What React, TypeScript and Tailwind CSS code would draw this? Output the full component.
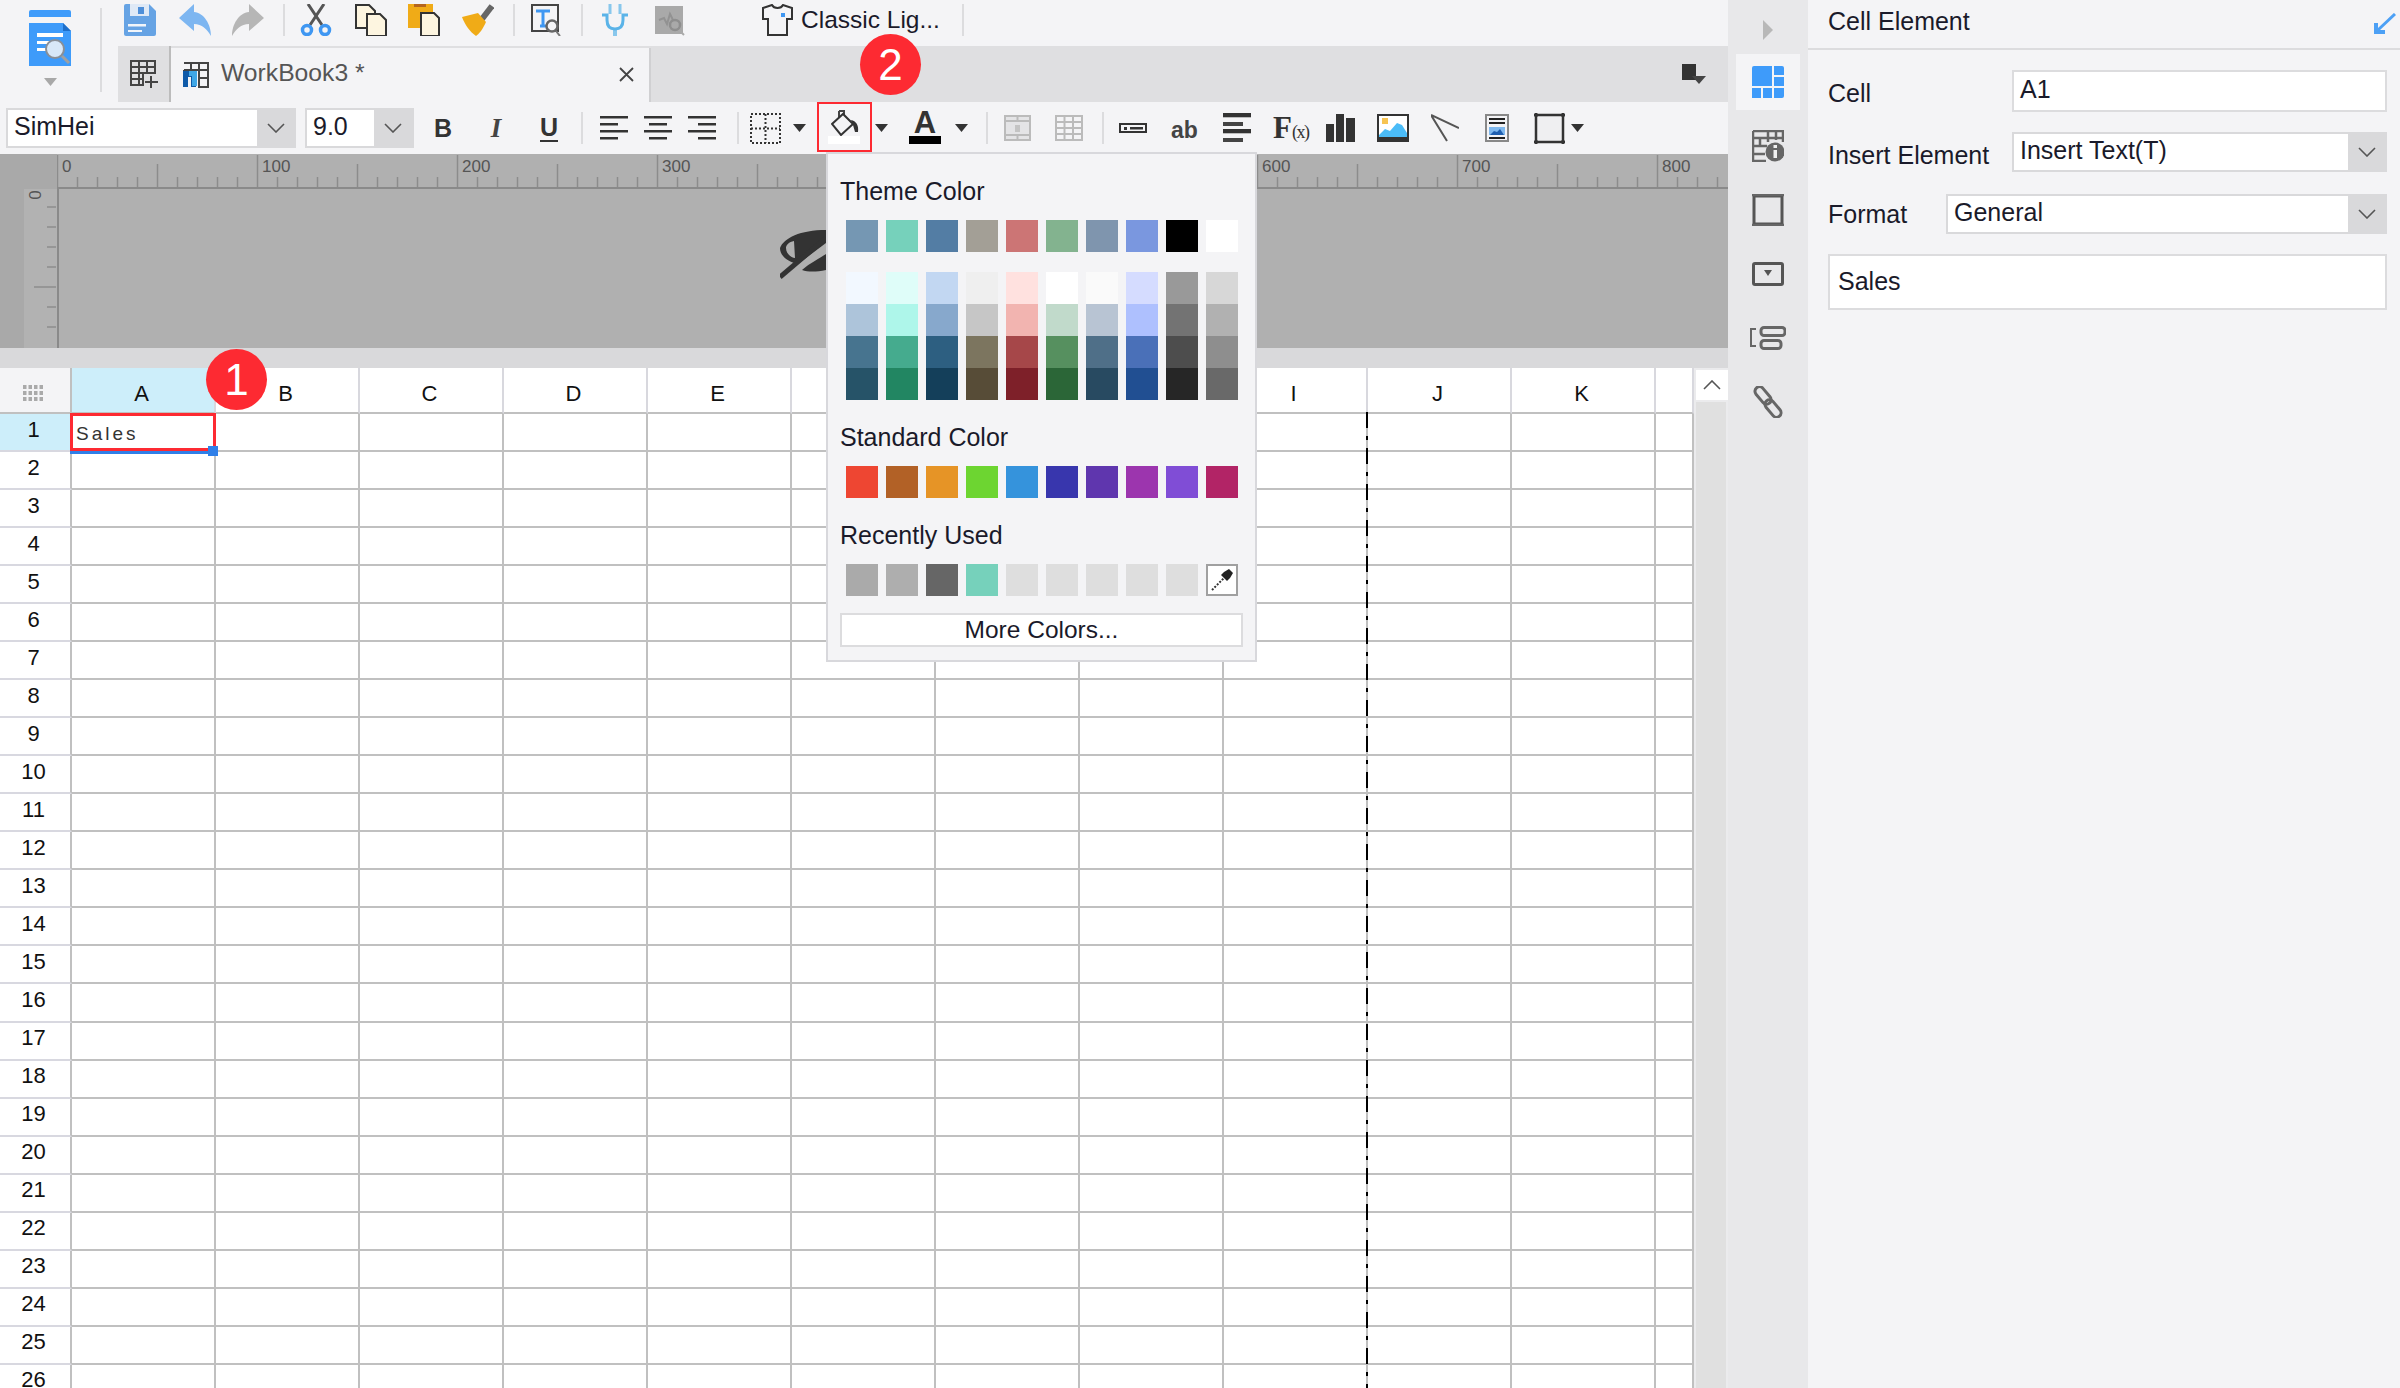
import React from "react";

const SANS = "[font-family:'Liberation_Sans',Arial,sans-serif]";

const themeTop = ["bg-[#7597b3]","bg-[#76d1bb]","bg-[#537da4]","bg-[#a39f96]","bg-[#cc7575]","bg-[#83b38f]","bg-[#7f95ae]","bg-[#7a97df]","bg-[#000000]","bg-[#ffffff]"];
const shades = [
  ["bg-[#f2f8ff]","bg-[#dffdf9]","bg-[#c2d7f2]","bg-[#efefef]","bg-[#ffe1df]","bg-[#ffffff]","bg-[#fafafa]","bg-[#d5dcff]","bg-[#999999]","bg-[#d7d7d7]"],
  ["bg-[#adc4da]","bg-[#aef6ea]","bg-[#87a8cc]","bg-[#c6c6c6]","bg-[#f2b4b0]","bg-[#c1dacb]","bg-[#b8c4d3]","bg-[#aec0fe]","bg-[#737373]","bg-[#b1b1b1]"],
  ["bg-[#47748f]","bg-[#45ab8e]","bg-[#2d5f81]","bg-[#7c755f]","bg-[#a64749]","bg-[#56905f]","bg-[#4f6f88]","bg-[#4a70b8]","bg-[#4d4d4d]","bg-[#8e8e8e]"],
  ["bg-[#265368]","bg-[#228662]","bg-[#143f5a]","bg-[#574c37]","bg-[#7e2029]","bg-[#2b6637]","bg-[#284a61]","bg-[#214f92]","bg-[#262626]","bg-[#696969]"],
];
const standard = ["bg-[#ee4632]","bg-[#b26126]","bg-[#e69426]","bg-[#6dd531]","bg-[#3593dc]","bg-[#3836ad]","bg-[#5f36ae]","bg-[#9c35ae]","bg-[#804dd6]","bg-[#b22466]"];
const recent = ["bg-[#aaaaaa]","bg-[#aeaeae]","bg-[#666666]","bg-[#76d1bb]","bg-[#dedede]","bg-[#dedede]","bg-[#dedede]","bg-[#dedede]","bg-[#dedede]"];

const columns = ["A","B","C","D","E","F","G","H","I","J","K",""];
const rows = Array.from({ length: 26 }, (_, i) => i + 1);

function Chevron({ up = false }: { up?: boolean }) {
  return (
    <svg width="18" height="10" viewBox="0 0 18 10" fill="none" stroke="#555" strokeWidth="1.6">
      <path d={up ? "M1 9 L9 1 L17 9" : "M1 1 L9 9 L17 1"} />
    </svg>
  );
}

function Tri({ className }: { className: string }) {
  return (
    <svg className={className} width="13" height="8" viewBox="0 0 13 8">
      <path d="M0 0 H13 L6.5 8 Z" fill="#333" />
    </svg>
  );
}

function Sep({ className }: { className: string }) {
  return <div className={`w-[2px] bg-[#dcdcde] ${className}`} />;
}

function Combo({ className, text, btn }: { className: string; text: string; btn: string }) {
  return (
    <div className={`flex border-2 border-[#d9d9db] bg-white ${className}`}>
      <div className="flex-1 min-w-0 pl-[6px] pb-[2px] flex items-center text-[25px] text-[#1a1a2a] whitespace-nowrap">{text}</div>
      <div className={`flex items-center justify-center bg-[#d9d9db] ${btn}`}><Chevron /></div>
    </div>
  );
}

function AlignIcon({ kind, className }: { kind: "l" | "c" | "r"; className: string }) {
  const short = kind === "l" ? 0 : kind === "c" ? 5 : 10;
  return (
    <svg className={className} width="28" height="24" viewBox="0 0 28 24" fill="#333">
      <rect x="0" y="0" width="28" height="2.5" />
      <rect x={short} y="7" width="18" height="2.5" />
      <rect x="0" y="14" width="28" height="2.5" />
      <rect x={short} y="21" width="18" height="2.5" />
    </svg>
  );
}

function Swatches({ items, extra, className }: { items: string[]; extra?: React.ReactNode; className: string }) {
  return (
    <div className={`grid grid-cols-[repeat(10,32px)] gap-x-[8px] ${className}`}>
      {items.map((c, i) => <div key={i} className={`h-[32px] ${c}`} />)}
      {extra}
    </div>
  );
}

function ColorPopup() {
  return (
    <div className="absolute left-[826px] top-[152px] w-[431px] h-[510px] border-2 border-[#d8d8dc] bg-[#f4f4f6] text-[25px] leading-[30px] text-[#1a1a2a]">
      <div className="ml-[12px] mt-[22px]">Theme Color</div>
      <Swatches className="ml-[18px] mt-[14px]" items={themeTop} />
      <div className="ml-[18px] mt-[20px] flex flex-col">
        {shades.map((r, i) => (
          <Swatches key={i} className="" items={r} />
        ))}
      </div>
      <div className="ml-[12px] mt-[22px]">Standard Color</div>
      <Swatches className="ml-[18px] mt-[14px]" items={standard} />
      <div className="ml-[12px] mt-[22px]">Recently Used</div>
      <Swatches
        className="ml-[18px] mt-[14px]"
        items={recent}
        extra={
          <div className="h-[32px] w-[32px] border-2 border-[#a0a0a0] bg-white flex items-center justify-center">
            <svg width="26" height="26" viewBox="0 0 26 26" fill="none">
              <path d="M3 23 L15 11" stroke="#333" strokeWidth="2" strokeDasharray="2 1.5" />
              <path d="M12 8 L18 14 L21 11 L24 6 L20 2 L15 5 Z" fill="#222" />
            </svg>
          </div>
        }
      />
      <div className="ml-[12px] mt-[17px] w-[403px] h-[34px] border-2 border-[#dcdcde] bg-white flex items-center justify-center text-[24.5px]">More Colors...</div>
    </div>
  );
}

function Badge({ n, className }: { n: string; className: string }) {
  return (
    <div className={`absolute w-[61px] h-[61px] rounded-full bg-[#fd2a32] text-white text-[44px] leading-none flex items-center justify-center ${className}`}>{n}</div>
  );
}

function TopIcons() {
  return (
    <div className="h-[46px] flex items-start pt-[4px]">
      {/* save */}
      <svg className="ml-[6px]" width="32" height="32" viewBox="0 0 32 32">
        <path d="M0 2 Q0 0 2 0 H25 L32 7 V30 Q32 32 30 32 H2 Q0 32 0 30 Z" fill="#66a3e4" />
        <rect x="6" y="0" width="19" height="12" fill="#dfe9f6" />
        <rect x="14" y="3" width="6" height="7" fill="#4f8fd8" />
        <rect x="4" y="20" width="18" height="2.5" fill="#f1f5fa" />
        <rect x="4" y="26" width="14" height="2" fill="#f1f5fa" />
      </svg>
      {/* undo */}
      <svg className="ml-[23px]" width="32" height="32" viewBox="0 0 32 32">
        <path d="M0 14 L15 0 V8 C25 9 32 20 32 32 C28 25 23 20 15 20 V27 Z" fill="#7db6f1" />
      </svg>
      {/* redo */}
      <svg className="ml-[21px]" width="32" height="32" viewBox="0 0 32 32">
        <path d="M32 14 L17 0 V8 C7 9 0 20 0 32 C4 25 9 20 17 20 V27 Z" fill="#b6b6b6" />
      </svg>
      <Sep className="ml-[19px] h-[32px]" />
      {/* scissors */}
      <svg className="ml-[15px]" width="32" height="32" viewBox="0 0 32 32" fill="none">
        <path d="M8 0 L22 21 M24 0 L10 21" stroke="#555" strokeWidth="3" />
        <circle cx="7" cy="26" r="4.5" stroke="#3f97f2" strokeWidth="3.5" />
        <circle cx="25" cy="26" r="4.5" stroke="#3f97f2" strokeWidth="3.5" />
      </svg>
      {/* copy */}
      <svg className="ml-[23px]" width="32" height="32" viewBox="0 0 32 32">
        <path d="M1 1 H14 L20 7 V24 H1 Z" fill="#fdf5e0" stroke="#333" strokeWidth="2" />
        <path d="M12 10 H25 L31 16 V32 H12 Z" fill="#fdf5e0" stroke="#333" strokeWidth="2" />
      </svg>
      {/* paste */}
      <svg className="ml-[21px]" width="32" height="32" viewBox="0 0 32 32">
        <rect x="0" y="0" width="25" height="24" fill="#f0ab17" />
        <rect x="6" y="0" width="12" height="3" fill="#b5651d" />
        <path d="M13 9 H26 L31 14 V32 H13 Z" fill="#fdf5e0" stroke="#333" strokeWidth="2" />
      </svg>
      {/* brush */}
      <svg className="ml-[22px]" width="32" height="32" viewBox="0 0 32 32">
        <path d="M20 15 L30 2" stroke="#666" strokeWidth="6" />
        <path d="M0 13 L16 9 L24 18 C21 25 17 30 14 32 C8 28 3 21 0 13 Z" fill="#f0ab17" />
      </svg>
      <Sep className="ml-[19px] h-[32px]" />
      {/* text preview */}
      <svg className="ml-[16px]" width="32" height="32" viewBox="0 0 32 32" fill="none">
        <rect x="1" y="1" width="26" height="26" stroke="#444" strokeWidth="2" />
        <path d="M5 7 H19 M12 7 V22 M9 22 H15" stroke="#3f97f2" strokeWidth="3" />
        <circle cx="21" cy="22" r="5.5" fill="#f4f4f6" stroke="#666" strokeWidth="2.5" />
        <path d="M25 27 L29 32" stroke="#777" strokeWidth="2" />
      </svg>
      <Sep className="ml-[18px] h-[32px]" />
      {/* plug */}
      <svg className="ml-[19px]" width="26" height="32" viewBox="0 0 26 32" fill="none" stroke="#5ab3e8">
        <path d="M8 0 V10 M18 0 V10" strokeWidth="3" opacity="0.7" />
        <path d="M0 11 H5 V16 C5 23 9 25 13 25 C17 25 21 23 21 16 V11 H26" strokeWidth="3" />
        <path d="M13 25 V32" strokeWidth="4" opacity="0.7" />
      </svg>
      {/* disabled */}
      <svg className="ml-[27px]" width="32" height="32" viewBox="0 0 32 32" fill="none">
        <rect x="0" y="2" width="28" height="28" fill="#a9a9a9" />
        <path d="M4 16 L9 14 L12 20 L15 10 L18 16" stroke="#929292" strokeWidth="2" />
        <circle cx="20" cy="21" r="5" stroke="#8e8e8e" strokeWidth="2.5" />
        <path d="M24 26 L29 31" stroke="#aaa" strokeWidth="2" />
      </svg>
      {/* shirt */}
      <svg className="ml-[75px]" width="32" height="32" viewBox="0 0 32 32" fill="none">
        <path d="M10 1 L1 4 L1 15 L6 15 V31 H25 V15 L30 15 L30 4 L21 1 C19 5 12 5 10 1 Z" stroke="#333" strokeWidth="2" />
        <rect x="19" y="9" width="4" height="4" fill="#3f97f2" />
      </svg>
      <span className="ml-[7px] text-[24.5px] leading-[32px] pb-[2px] text-[#1a1a2a] whitespace-nowrap">Classic Lig...</span>
      <Sep className="ml-[22px] h-[32px]" />
    </div>
  );
}

function TabBar() {
  return (
    <div className="h-[56px] flex items-stretch bg-[#dfdfe1]">
      <div className="w-[53px] flex items-center justify-center border-r-2 border-[#bcbcbc]">
        <svg width="28" height="28" viewBox="0 0 28 28" fill="none" stroke="#444" strokeWidth="2">
          <path d="M1 1 H25 V13 H1 Z M1 1 V25 H13 V13 M9 1 V25 M17 1 V13 M1 7 H25 M1 19 H13" />
          <path d="M21 16 V28 M15 22 H28" />
        </svg>
      </div>
      <div className="w-[480px] mt-[2px] bg-[#f4f4f6] border-r-2 border-[#d0d0d2] flex items-center relative">
        <svg className="ml-[12px]" width="26" height="26" viewBox="0 0 26 26" fill="none">
          <path d="M1 1 H25 V25 H16 V1 M8 1 V8 M16 8 H25 M1 8 H25 M16 16 H25 M1 8 V12" stroke="#444" strokeWidth="2" />
          <path d="M0 9 H13 V25 H8 V15 H5 V25 H0 Z" fill="#0f5aa8" />
          <path d="M6 9 H14 V24 H9 V14 H6 Z" fill="#3fa7e6" />
        </svg>
        <span className="ml-[12px] text-[24.7px] leading-none text-[#555] pb-[4px] whitespace-nowrap">WorkBook3 *</span>
        <svg className="absolute left-[448px] top-[19px]" width="15" height="15" viewBox="0 0 15 15" stroke="#444" strokeWidth="1.8">
          <path d="M1 1 L14 14 M14 1 L1 14" />
        </svg>
      </div>
      <div className="flex-1 flex items-start justify-end pt-[18px] pr-[22px]">
        <svg width="24" height="20" viewBox="0 0 24 20">
          <rect x="0" y="0" width="14" height="16" fill="#333" />
          <path d="M10 12 H24 L17 20 Z" fill="#444" />
        </svg>
      </div>
    </div>
  );
}

function FormatBar() {
  return (
    <div className="h-[52px] flex items-center">
      <Combo className="ml-[6px] w-[290px] h-[40px]" btn="w-[37px]" text="SimHei" />
      <Combo className="ml-[9px] w-[109px] h-[40px]" btn="w-[38px]" text="9.0" />
      <span className="ml-[20px] w-[16px] text-center text-[25px] font-bold leading-none text-[#333]">B</span>
      <span className="ml-[40px] w-[12px] text-center text-[27px] italic font-bold leading-none text-[#444] [font-family:'Liberation_Serif',serif]">I</span>
      <span className="ml-[38px] w-[18px] text-center text-[25px] font-bold leading-none text-[#333] border-b-2 border-[#333]">U</span>
      <Sep className="ml-[23px] h-[32px]" />
      <AlignIcon kind="l" className="ml-[17px]" />
      <AlignIcon kind="c" className="ml-[16px]" />
      <AlignIcon kind="r" className="ml-[16px]" />
      <Sep className="ml-[21px] h-[32px]" />
      <svg className="ml-[11px]" width="31" height="31" viewBox="0 0 31 31" fill="none" stroke="#333" strokeWidth="2" strokeDasharray="2 2">
        <rect x="1" y="1" width="29" height="29" />
        <path d="M15.5 1 V30 M1 15.5 H30" />
      </svg>
      <Tri className="ml-[12px]" />
      <div className="ml-[11px] self-start w-[55px] h-[50px] border-2 border-[#fd2a32] flex flex-col items-start pl-[9px] pt-[6px]">
        <svg className="ml-[3px]" width="28" height="26" viewBox="0 0 28 26" fill="none">
          <path d="M8 1 H13 V5" stroke="#444" strokeWidth="2" />
          <path d="M8 1 V8" stroke="#444" strokeWidth="2" />
          <path d="M1 14 L12 4 L22 14 L10 25 Z" fill="#f4f4f6" stroke="#333" strokeWidth="2" />
          <path d="M20 10 C25 11 28 15 27 22 L24 22 L22 15 Z" fill="#333" />
        </svg>
        <div className="w-[32px] h-[8px] bg-white" />
      </div>
      <Tri className="ml-[3px]" />
      <div className="ml-[21px] w-[32px] self-start pt-[8px] flex flex-col items-center">
        <span className="h-[26px] text-[31px] font-bold leading-[26px] text-[#333]">A</span>
        <div className="w-[32px] h-[8px] bg-black" />
      </div>
      <Tri className="ml-[14px]" />
      <Sep className="ml-[18px] h-[32px]" />
      <svg className="ml-[16px]" width="27" height="26" viewBox="0 0 27 26" fill="none">
        <rect x="1" y="1" width="25" height="24" fill="#e4e4e6" stroke="#bbb" strokeWidth="2" />
        <path d="M1 6 H26 M1 20 H26 M13.5 1 V6 M13.5 20 V25" stroke="#bbb" strokeWidth="2" />
        <rect x="11" y="10" width="5" height="7" fill="#c4c4c4" />
      </svg>
      <svg className="ml-[24px]" width="28" height="26" viewBox="0 0 28 26" fill="none" stroke="#bbb" strokeWidth="2">
        <rect x="1" y="1" width="26" height="24" />
        <path d="M9.5 1 V25 M18 1 V25 M1 7 H27 M1 13 H27 M1 19 H27" />
      </svg>
      <Sep className="ml-[19px] h-[32px]" />
      <svg className="ml-[15px]" width="28" height="10" viewBox="0 0 28 10" fill="none">
        <rect x="1" y="1" width="26" height="8" stroke="#333" strokeWidth="2" />
        <rect x="5" y="4" width="3" height="3" fill="#333" />
        <rect x="11" y="4" width="13" height="2.5" fill="#333" />
      </svg>
      <span className="ml-[24px] w-[23px] pt-[4px] text-[23px] font-bold leading-none text-[#444] whitespace-nowrap">ab</span>
      <svg className="ml-[29px]" width="28" height="30" viewBox="0 0 28 30">
        <rect x="0" y="0" width="28" height="4" fill="#333" />
        <rect x="0" y="4" width="28" height="1" fill="#bbb" />
        <rect x="0" y="9" width="20" height="4" fill="#444" />
        <rect x="0" y="16" width="28" height="4" fill="#333" />
        <rect x="0" y="20" width="28" height="1" fill="#bbb" />
        <rect x="0" y="25" width="20" height="4" fill="#444" />
      </svg>
      <span className="ml-[22px] w-[33px] text-[#333] leading-none whitespace-nowrap [font-family:'Liberation_Serif',serif] pb-[2px]">
        <span className="text-[31px] font-bold">F</span><span className="text-[18px] tracking-[-1.5px]">(x)</span>
      </span>
      <svg className="ml-[20px]" width="29" height="28" viewBox="0 0 29 28" fill="#333">
        <rect x="0" y="10" width="8" height="18" />
        <rect x="10" y="0" width="8" height="28" />
        <rect x="20" y="4" width="9" height="24" />
      </svg>
      <svg className="ml-[22px]" width="32" height="28" viewBox="0 0 32 28">
        <rect x="0" y="0" width="32" height="28" fill="#333" />
        <rect x="2" y="2" width="28" height="21" fill="#fff" />
        <path d="M2 21 L8 15 L13 17 L20 9 L25 11 L30 19 V23 H2 Z" fill="#4bbcf8" />
        <rect x="5" y="4" width="6" height="6" fill="#f7c453" />
      </svg>
      <svg className="ml-[22px]" width="28" height="28" viewBox="0 0 28 28" fill="none" stroke="#555" strokeWidth="2">
        <path d="M0 1 L28 14 M0 1 L16 27" />
      </svg>
      <svg className="ml-[26px]" width="24" height="28" viewBox="0 0 24 28">
        <rect x="1" y="1" width="22" height="26" fill="#f4f4f6" stroke="#888" strokeWidth="2" />
        <rect x="4" y="4" width="16" height="2" fill="#222" />
        <rect x="4" y="8" width="16" height="2" fill="#222" />
        <rect x="4" y="13" width="16" height="8" fill="#7fb8ee" />
        <path d="M5 21 L9 17 L12 18 L15 15 L19 21 Z" fill="#1f5fb0" />
        <rect x="4" y="23" width="16" height="2" fill="#222" />
      </svg>
      <svg className="ml-[25px]" width="31" height="31" viewBox="0 0 31 31" fill="none">
        <rect x="2" y="2" width="27" height="27" fill="#efeff1" stroke="#333" strokeWidth="2.5" />
        <path d="M2 0 V4 M29 0 V4 M2 27 V31 M29 27 V31 M0 2 H4 M27 2 H31 M0 29 H4 M27 29 H31" stroke="#333" strokeWidth="2.5" />
      </svg>
      <Tri className="ml-[6px]" />
    </div>
  );
}

function Ruler() {
  const ticks = Array.from({ length: 84 }, (_, i) => i);
  const labels = [0, 100, 200, 300, 400, 500, 600, 700, 800];
  const vticks = [0, 1, 2, 3, 4, 5, 6];
  return (
    <div className="h-[194px] bg-[#b0b0b0] flex flex-col">
      <div className="h-[35px] flex">
        <div className="w-[57px] bg-[#a9a9a9]" />
        <svg className="flex-1" width="1671" height="35" viewBox="0 0 1671 35">
          {ticks.map((i) => {
            const x = i * 20 + 0.5;
            const top = i % 10 === 0 ? 1 : i % 5 === 0 ? 10 : 23;
            return <line key={i} x1={x} x2={x} y1={top} y2={33} stroke="#8c8c8c" strokeWidth="1.5" />;
          })}
          {labels.map((n) => (
            <text key={n} x={n * 2 + 5} y={18} fontSize="17" fill="#555" fontFamily="Liberation Sans">{n}</text>
          ))}
          <rect x="0" y="33" width="1671" height="2" fill="#8a8a8a" />
        </svg>
      </div>
      <div className="flex-1 flex min-h-0">
        <div className="w-[24px] bg-[#a9a9a9]" />
        <svg width="33" height="159" viewBox="0 0 33 159" className="bg-[#b2b2b2]">
          <text x="11" y="6" fontSize="17" fill="#555" fontFamily="Liberation Sans" textAnchor="middle" dominantBaseline="central" transform="rotate(-90 11 6)">0</text>
          {vticks.map((i) => (
            <line key={i} x1={i === 4 ? 10 : 23} x2={32} y1={18 + i * 20} y2={18 + i * 20} stroke="#8c8c8c" strokeWidth="1.5" />
          ))}
        </svg>
        <div className="w-[2px] bg-[#8a8a8a]" />
        <div className="flex-1 relative">
          <svg className="absolute left-[721px] top-[39px]" width="48" height="52" viewBox="0 0 48 52">
            <path d="M0 20 C4 10 20 2 46 2 V15 L18 36 C8 34 0 28 0 20 Z M6 20 C6 26 12 30 15 30 L14 13 C9 14 6 17 6 20 Z" fillRule="evenodd" fill="#333" />
            <path d="M22 42 C30 35 40 30 46 26 V42 C36 44 28 44 22 42 Z" fill="#333" />
            <path d="M0 49 L46 10" stroke="#333" strokeWidth="5" />
          </svg>
        </div>
      </div>
    </div>
  );
}

function Sheet() {
  return (
    <div className="flex-1 min-h-0 flex overflow-hidden">
      <div className="relative w-[1694px] overflow-hidden">
        <div className="grid grid-cols-[72px_repeat(11,144px)_38px] grid-rows-[46px] auto-rows-[38.04px] text-[22px] text-[#111]">
          <div className="bg-[#f4f4f6] border-r-2 border-b-2 border-r-[#c0c0c0] border-b-[#c0c0c0] flex items-center justify-center pt-[6px] pr-[4px]">
            <svg width="20" height="16" viewBox="0 0 20 16" fill="#aaa">
              {[0, 1, 2, 3].flatMap((c) => [0, 1, 2].map((r) => <rect key={`${c}-${r}`} x={c * 5.5} y={r * 6} width="3.5" height="4" />))}
            </svg>
          </div>
          {columns.map((c, i) => (
            <div key={i} className={`border-b-2 border-b-[#c0c0c0] border-r-2 border-r-[#d8d8de] flex items-center justify-center pt-[6px] pr-[3px] ${i === 0 ? "bg-[#cdeefa]" : "bg-white"}`}>{c}</div>
          ))}
          {rows.map((r) => (
            <React.Fragment key={r}>
              <div className={`border-r-2 border-r-[#c0c0c0] border-b-2 border-b-[#d8d8e0] flex items-center justify-center pb-[6px] pr-[3px] ${r === 1 ? "bg-[#cdeefa]" : "bg-white"}`}>{r}</div>
              {columns.map((c, i) => (
                <div key={i} className="bg-white border-r-2 border-b-2 border-[#c0c0c0]" />
              ))}
            </React.Fragment>
          ))}
        </div>
        {/* page break */}
        <svg className="absolute left-[1366px] top-[44px]" width="2" height="976" viewBox="0 0 2 976">
          <line x1="1" x2="1" y1="0" y2="976" stroke="#000" strokeWidth="2" strokeDasharray="16 8 4 8" />
        </svg>
        {/* selection */}
        <div className="absolute left-[70px] top-[45px] w-[146px] h-[41px] border-b-4 border-r-2 border-[#2f7fe8]">
          <div className="absolute left-0 top-0 right-[-2px] bottom-[-1px] border-[3px] border-[#fd2a32] flex items-center pl-[3px] pt-[5px] text-[19px] tracking-[3px] text-[#333]">Sales</div>
          <div className="absolute right-[-4px] bottom-[-6px] w-[10px] h-[10px] bg-[#2f7fe8]" />
        </div>
      </div>
      <div className="w-[34px] bg-[#ebebed] pl-[2px] flex flex-col">
        <div className="mt-[2px] h-[30px] w-[32px] bg-white flex items-center justify-center"><Chevron up /></div>
        <div className="mt-[2px] flex-1 w-[30px] bg-[#e0e0e0]" />
      </div>
    </div>
  );
}

function SideStrip() {
  return (
    <div className="w-[80px] bg-[#e8e8ea] flex flex-col items-center">
      <svg className="mt-[20px]" width="10" height="20" viewBox="0 0 10 20"><path d="M0 0 L10 10 L0 20 Z" fill="#b8b8b8" /></svg>
      <div className="mt-[14px] w-[64px] h-[56px] bg-[#f4f4f6] flex items-center justify-center">
        <svg width="32" height="32" viewBox="0 0 32 32" fill="#3e9bfa">
          <path d="M2 0 H20 V20 H0 V2 Q0 0 2 0 Z" />
          <path d="M22 0 H30 Q32 0 32 2 V9 H22 Z" />
          <rect x="22" y="11" width="10" height="9" />
          <rect x="0" y="22" width="9" height="10" />
          <rect x="11" y="22" width="9" height="10" />
          <path d="M22 22 H32 V30 Q32 32 30 32 H22 Z" />
        </svg>
      </div>
      <svg className="mt-[20px]" width="32" height="32" viewBox="0 0 32 32" fill="none">
        <path d="M1 1 H31 V12 M1 1 V31 H14 M1 8 H31 M1 16 H15 M1 24 H13 M8 8 V16 M16 2 V12 M24 2 V10" stroke="#666" strokeWidth="2.5" />
        <circle cx="23" cy="22" r="9.5" fill="#666" />
        <rect x="21.5" y="20" width="3.5" height="8" fill="#f0f0f0" />
        <rect x="21.5" y="15" width="3.5" height="3" fill="#f0f0f0" />
      </svg>
      <svg className="mt-[32px]" width="32" height="32" viewBox="0 0 32 32" fill="none">
        <rect x="2" y="2" width="28" height="28" stroke="#555" strokeWidth="3" />
        <path d="M0 1 H32 M0 31 H32" stroke="#666" strokeWidth="2.5" />
      </svg>
      <svg className="mt-[36px]" width="32" height="24" viewBox="0 0 32 24" fill="none">
        <rect x="1.5" y="1.5" width="29" height="21" rx="1.5" stroke="#555" strokeWidth="3" />
        <path d="M12 8 H20 L16 14 Z" fill="#555" />
      </svg>
      <svg className="mt-[40px]" width="36" height="24" viewBox="0 0 36 24" fill="none" stroke="#666">
        <rect x="11" y="1.5" width="24" height="8" rx="3" strokeWidth="3" />
        <rect x="11" y="14.5" width="20" height="8" rx="3" strokeWidth="3" />
        <path d="M6 3 H1 V20 H6" strokeWidth="2" />
      </svg>
      <svg className="mt-[36px]" width="32" height="32" viewBox="0 0 32 32" fill="none" stroke="#666" strokeWidth="3">
        <rect x="1" y="5" width="20" height="9" rx="4.5" transform="rotate(50 11 9.5)" />
        <rect x="11" y="18" width="20" height="9" rx="4.5" transform="rotate(50 21 22.5)" />
      </svg>
    </div>
  );
}

function Panel() {
  return (
    <div className="w-[592px] bg-[#f4f4f6] text-[25px] text-[#1a1a2a]">
      <div className="h-[50px] border-b-2 border-[#dcdcde] flex items-center justify-between pl-[20px] pr-[4px] pb-[6px]">
        <span className="leading-none">Cell Element</span>
        <svg className="mt-[6px]" width="23" height="22" viewBox="0 0 23 22" fill="none" stroke="#4ca0f5">
          <path d="M5 17 L22 1" strokeWidth="3" />
          <path d="M3 10 V19 H12" strokeWidth="4" />
        </svg>
      </div>
      <div className="mt-[20px] pl-[20px] flex items-center">
        <span className="w-[184px] pt-[4px] leading-none">Cell</span>
        <div className="w-[375px] h-[42px] border-2 border-[#dcdcde] bg-white pl-[6px] pb-[2px] flex items-center">A1</div>
      </div>
      <div className="mt-[20px] pl-[20px] flex items-center">
        <span className="w-[184px] pt-[6px] leading-none">Insert Element</span>
        <Combo className="w-[375px] h-[40px]" btn="w-[37px]" text="Insert Text(T)" />
      </div>
      <div className="mt-[22px] pl-[20px] flex items-center">
        <span className="w-[118px] leading-none">Format</span>
        <Combo className="w-[441px] h-[40px]" btn="w-[37px]" text="General" />
      </div>
      <div className="mt-[20px] ml-[20px] w-[559px] h-[56px] border-2 border-[#dcdcde] bg-white pl-[8px] flex items-center">Sales</div>
    </div>
  );
}

export default function App() {
  return (
    <div className={`relative w-[2400px] h-[1388px] overflow-hidden flex bg-[#f4f4f6] ${SANS}`}>
      <div className="w-[1728px] flex flex-col">
        <div className="h-[102px] flex">
          <div className="w-[118px] flex">
            <div className="w-[100px] flex flex-col items-center pt-[10px]">
              <div className="w-[42px] h-[7px] rounded-t-[2px] bg-[#3e9bfa]" />
              <svg className="mt-[6px]" width="42" height="43" viewBox="0 0 42 43">
                <path d="M0 0 H34 L42 8 V43 H0 Z" fill="#3e9bfa" />
                <path d="M34 0 L42 8 H34 Z" fill="#1f6fc9" />
                <rect x="8" y="10" width="26" height="4" fill="#fff" />
                <rect x="8" y="18" width="14" height="3" fill="#fff" />
                <rect x="8" y="25" width="12" height="3" fill="#fff" />
                <circle cx="26" cy="26" r="9" fill="#d8e8f8" stroke="#8a8f96" strokeWidth="2" />
                <path d="M33 33 L40 40" stroke="#a0a0a0" strokeWidth="3" />
              </svg>
              <svg className="mt-[12px]" width="13" height="8" viewBox="0 0 13 8"><path d="M0 0 H13 L6.5 8 Z" fill="#a8a8a8" /></svg>
            </div>
            <Sep className="mt-[8px] h-[84px]" />
          </div>
          <div className="flex-1 flex flex-col min-w-0">
            <TopIcons />
            <TabBar />
          </div>
        </div>
        <FormatBar />
        <Ruler />
        <div className="h-[20px] bg-[#d9d9db]" />
        <Sheet />
      </div>
      <SideStrip />
      <Panel />
      <ColorPopup />
      <Badge n="1" className="left-[206px] top-[349px]" />
      <Badge n="2" className="left-[860px] top-[34px]" />
    </div>
  );
}
